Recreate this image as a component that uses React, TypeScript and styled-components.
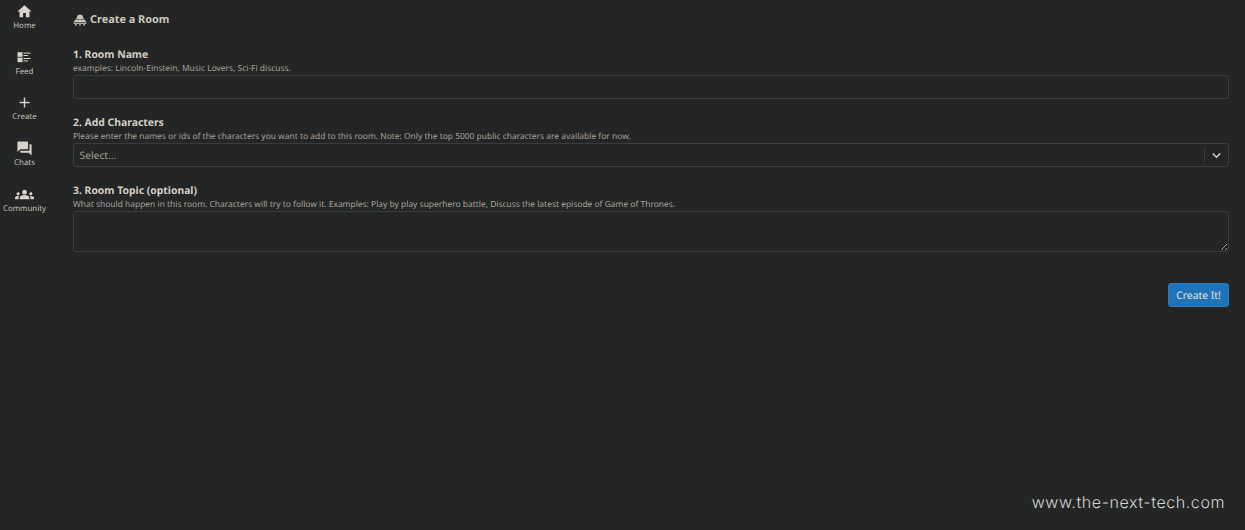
import React from "react";
import styled, { createGlobalStyle } from "styled-components";
import { MdAdd, MdForum, MdGroups, MdHome, MdKeyboardArrowDown } from "react-icons/md";

const GlobalStyle = createGlobalStyle`
  html, body {
    margin: 0;
    height: 100%;
    background-color: #242525;
    font-family: "Noto Sans", "Open Sans", sans-serif;
    color: #d8d4cc;
    text-rendering: geometricPrecision;
  }
  * {
    box-sizing: border-box;
  }
`;

const FeedIcon = () => (
  <svg width="16" height="16" viewBox="0 0 16 16" fill="currentColor">
    <rect x="1.5" y="3.2" width="5" height="4.6" />
    <rect x="1.5" y="8.6" width="5" height="4.6" />
    <rect x="7.5" y="3.6" width="7" height="1" />
    <rect x="7.5" y="6" width="4.5" height="1" />
    <rect x="7.5" y="9" width="7" height="1" />
    <rect x="7.5" y="11.4" width="4.5" height="1" />
  </svg>
);

const RoomIcon = () => (
  <svg width="14" height="13" viewBox="0 0 14 13" fill="currentColor">
    <path d="M3.5 6 C3.5 3.2 5 1.5 7 1.5 C9 1.5 10.5 3.2 10.5 6 Z" />
    <path d="M2.5 6.6 H11.5 L13.5 9 H0.5 Z" />
    <rect x="0.5" y="9.6" width="13" height="1.2" />
    <circle cx="3" cy="11.8" r="0.9" />
    <circle cx="7" cy="11.8" r="0.9" />
    <circle cx="11" cy="11.8" r="0.9" />
  </svg>
);

const navItems = [
  { label: "Home", icon: <MdHome size={17} /> },
  { label: "Feed", icon: <FeedIcon /> },
  { label: "Create", icon: <MdAdd size={17} /> },
  { label: "Chats", icon: <MdForum size={17} /> },
  { label: "Community", icon: <MdGroups size={19} /> },
];

export default function App() {
  return (
    <Page>
      <GlobalStyle />
      <Sidebar>
        {navItems.map((item) => (
          <NavItem key={item.label}>
            <NavIcon>{item.icon}</NavIcon>
            <NavLabel>{item.label}</NavLabel>
          </NavItem>
        ))}
      </Sidebar>
      <Main>
        <Title>
          <RoomIcon />
          <TitleText>Create a Room</TitleText>
        </Title>
        <Section>
          <Label>1. Room Name</Label>
          <Hint>examples: Lincoln-Einstein, Music Lovers, Sci-Fi discuss.</Hint>
          <TextInput />
        </Section>
        <Section>
          <Label>2. Add Characters</Label>
          <Hint>
            Please enter the names or ids of the characters you want to add to this room. Note: Only
            the top 5000 public characters are available for now.
          </Hint>
          <SelectBox>
            <Placeholder>Select...</Placeholder>
            <SelectDivider />
            <SelectArrow>
              <MdKeyboardArrowDown size={17} />
            </SelectArrow>
          </SelectBox>
        </Section>
        <Section>
          <Label>3. Room Topic (optional)</Label>
          <Hint>
            What should happen in this room. Characters will try to follow it. Examples: Play by play
            superhero battle, Discuss the latest episode of Game of Thrones.
          </Hint>
          <TopicArea />
        </Section>
        <Actions>
          <CreateButton>Create It!</CreateButton>
        </Actions>
      </Main>
      <Watermark>www.the-next-tech.com</Watermark>
    </Page>
  );
}

const Page = styled.div`
  position: relative;
  display: flex;
  height: 530px;
  overflow: hidden;
  background-color: #242525;
`;

const Sidebar = styled.nav`
  display: flex;
  flex-direction: column;
  align-items: center;
  width: 49px;
  flex-shrink: 0;
  padding-top: 3px;
`;

const NavItem = styled.a`
  display: flex;
  flex-direction: column;
  align-items: center;
  height: 45.8px;
  color: #d8d4cc;
`;

const NavIcon = styled.span`
  display: flex;
  align-items: center;
  justify-content: center;
  height: 16.5px;
`;

const NavLabel = styled.span`
  margin-top: 1.3px;
  font-size: 7.9px;
  line-height: 11px;
  white-space: nowrap;
  color: #c4c0b8;
`;

const Main = styled.main`
  flex: 1;
  padding: 11px 16px 0 24px;
`;

const Title = styled.h1`
  display: flex;
  align-items: center;
  gap: 3px;
  margin: 0 0 20px;
  font-size: 10.9px;
  line-height: 16px;
  font-weight: 700;
  color: #c9c5bd;
`;

const TitleText = styled.span`
  padding-top: 2px;
  line-height: 14px;
`;

const Section = styled.section`
  margin-bottom: 16px;
`;

const Label = styled.div`
  padding-top: 2px;
  font-size: 10.4px;
  line-height: 13px;
  font-weight: 700;
  color: #d2cec6;
`;

const Hint = styled.div`
  font-size: 8.44px;
  line-height: 13px;
  color: #a8a49c;
  white-space: nowrap;
`;

const TextInput = styled.input`
  display: block;
  width: 100%;
  height: 24px;
  background: transparent;
  border: 1px solid #3a3c3d;
  border-radius: 3px;
  outline: none;
`;

const SelectBox = styled.div`
  display: flex;
  align-items: center;
  height: 24px;
  border: 1px solid #3a3c3d;
  border-radius: 3px;
`;

const Placeholder = styled.span`
  flex: 1;
  padding: 2px 0 0 5.5px;
  font-size: 10.3px;
  color: #a09c94;
`;

const SelectDivider = styled.span`
  width: 1px;
  height: 14px;
  background-color: #3a3c3d;
`;

const SelectArrow = styled.span`
  display: flex;
  align-items: center;
  justify-content: center;
  width: 23px;
  color: #d8d4cc;
`;

const TopicArea = styled.textarea`
  display: block;
  width: 100%;
  height: 41px;
  background: transparent;
  border: 1px solid #3a3c3d;
  border-radius: 3px;
  outline: none;
  color-scheme: dark;
`;

const Actions = styled.div`
  display: flex;
  justify-content: flex-end;
  margin-top: 31px;
`;

const CreateButton = styled.button`
  width: 61px;
  height: 24px;
  padding: 2px 0 0;
  background-color: #1f74b8;
  border: 1px solid #2a7cbd;
  border-radius: 3px;
  color: #e4e2dc;
  font-family: inherit;
  font-size: 10.4px;
  text-rendering: geometricPrecision;
`;

const Watermark = styled.div`
  position: absolute;
  right: 20px;
  bottom: 18px;
  font-family: "Inter", sans-serif;
  font-size: 16px;
  font-weight: 300;
  letter-spacing: 0.58px;
  color: #d4d4d4;
`;
